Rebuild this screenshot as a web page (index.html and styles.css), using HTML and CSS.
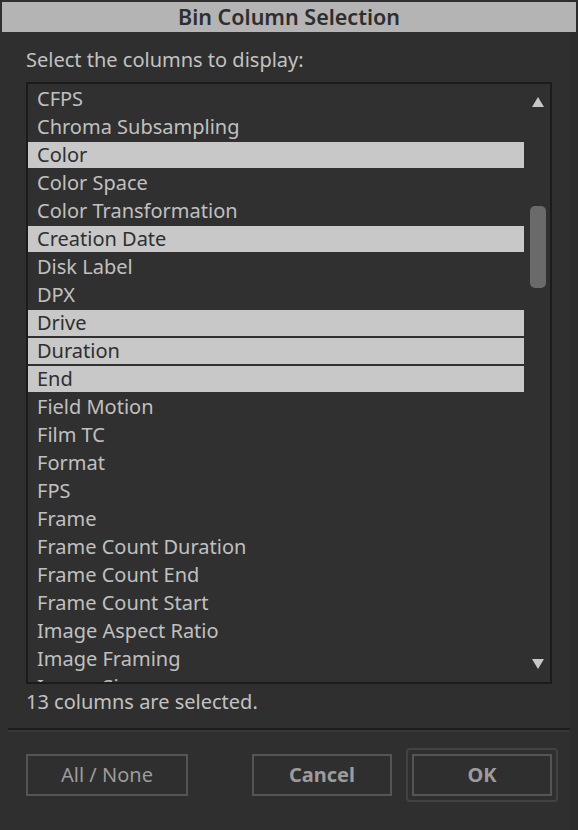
FILE: index.html
```html
<!DOCTYPE html>
<html>
<head>
<meta charset="utf-8">
<link rel="stylesheet" href="styles.css">
</head>
<body>
<div class="dialog">
  <div class="titlebar">Bin Column Selection</div>
  <div class="content">
    <div class="label">Select the columns to display:</div>
    <div class="listbox">
      <div class="items">
        <div class="item">CFPS</div>
        <div class="item">Chroma Subsampling</div>
        <div class="item sel">Color</div>
        <div class="item">Color Space</div>
        <div class="item">Color Transformation</div>
        <div class="item sel">Creation Date</div>
        <div class="item">Disk Label</div>
        <div class="item">DPX</div>
        <div class="item sel">Drive</div>
        <div class="item sel">Duration</div>
        <div class="item sel">End</div>
        <div class="item">Field Motion</div>
        <div class="item">Film TC</div>
        <div class="item">Format</div>
        <div class="item">FPS</div>
        <div class="item">Frame</div>
        <div class="item">Frame Count Duration</div>
        <div class="item">Frame Count End</div>
        <div class="item">Frame Count Start</div>
        <div class="item">Image Aspect Ratio</div>
        <div class="item">Image Framing</div>
        <div class="item">Image Size</div>
      </div>
      <div class="scrollbar">
        <svg class="arrow" width="12" height="10" viewBox="0 0 12 10"><polygon points="6,0 12,10 0,10"/></svg>
        <div class="track"><div class="thumb"></div></div>
        <svg class="arrow" width="12" height="10" viewBox="0 0 12 10"><polygon points="0,0 12,0 6,10"/></svg>
      </div>
    </div>
    <div class="status">13 columns are selected.</div>
  </div>
  <div class="separator"></div>
  <div class="buttons">
    <button class="btn all">All / None</button>
    <button class="btn bold cancel">Cancel</button>
    <span class="focusring"><button class="btn bold ok">OK</button></span>
  </div>
</div>
</body>
</html>
```
FILE: styles.css
```css
html, body {
  margin: 0;
  padding: 0;
  background: #2c2c2c;
}
body {
  font-family: "Noto Sans", "Open Sans", sans-serif;
}
.dialog {
  width: 578px;
  height: 830px;
  background: #2f2f2f;
  box-shadow: inset -8px 0 0 #2c2c2c;
  overflow: hidden;
}
.titlebar {
  margin: 2px 2px 0 2px;
  height: 30px;
  background: #b4b4b4;
  color: #2e2e2e;
  font-size: 21.5px;
  font-weight: 600;
  line-height: 30px;
  text-align: center;
}
.content {
  padding-left: 26px;
}
.label {
  margin-top: 16px;
  height: 24px;
  line-height: 24px;
  font-size: 20px;
  color: #c2c2c2;
}
.listbox {
  margin-top: 10px;
  width: 522px;
  height: 598px;
  border: 2px solid #1b1b1b;
  background: #303030;
  display: flex;
  overflow: hidden;
}
.items {
  width: 496px;
  height: 598px;
  padding-top: 2px;
  box-sizing: border-box;
  overflow: hidden;
}
.item {
  height: 26px;
  margin-bottom: 2px;
  line-height: 26px;
  padding-left: 9px;
  font-size: 20px;
  color: #c0c0c0;
  white-space: nowrap;
}
.item.sel {
  background: #c8c8c8;
  color: #2f2f2f;
}
.scrollbar {
  width: 26px;
  display: flex;
  flex-direction: column;
  align-items: center;
  padding: 13px 0 13px;
}
.arrow {
  fill: #c8c8c8;
  margin-left: 2px;
  flex: none;
}
.track {
  flex: 1;
  width: 16px;
  margin-left: 2px;
}
.thumb {
  margin-top: 99px;
  height: 82px;
  width: 16px;
  border-radius: 5px;
  background: #6a6a6a;
}
.status {
  margin-top: 6px;
  height: 24px;
  line-height: 24px;
  font-size: 20px;
  color: #c2c2c2;
}
.separator {
  margin: 14px 0 0 8px;
  width: 562px;
  height: 2px;
  background: #1d1d1d;
  border-bottom: 2px solid #363636;
}
.buttons {
  display: flex;
  align-items: center;
  padding-left: 26px;
  margin-top: 16px;
}
.btn {
  height: 42px;
  border: 2px solid #555555;
  background: #2f2f2f;
  color: #9c9c9c;
  font-family: "Noto Sans", "Open Sans", sans-serif;
  font-size: 20px;
  padding: 0 0 2px 0;
  box-sizing: border-box;
}
.btn.bold {
  font-weight: 700;
}
.all {
  width: 162px;
}
.cancel {
  width: 140px;
  margin-left: 64px;
}
.focusring {
  margin-left: 14px;
  display: flex;
  border: 2px solid #424242;
  border-radius: 4px;
  padding: 4px;
}
.ok {
  width: 140px;
}
```
